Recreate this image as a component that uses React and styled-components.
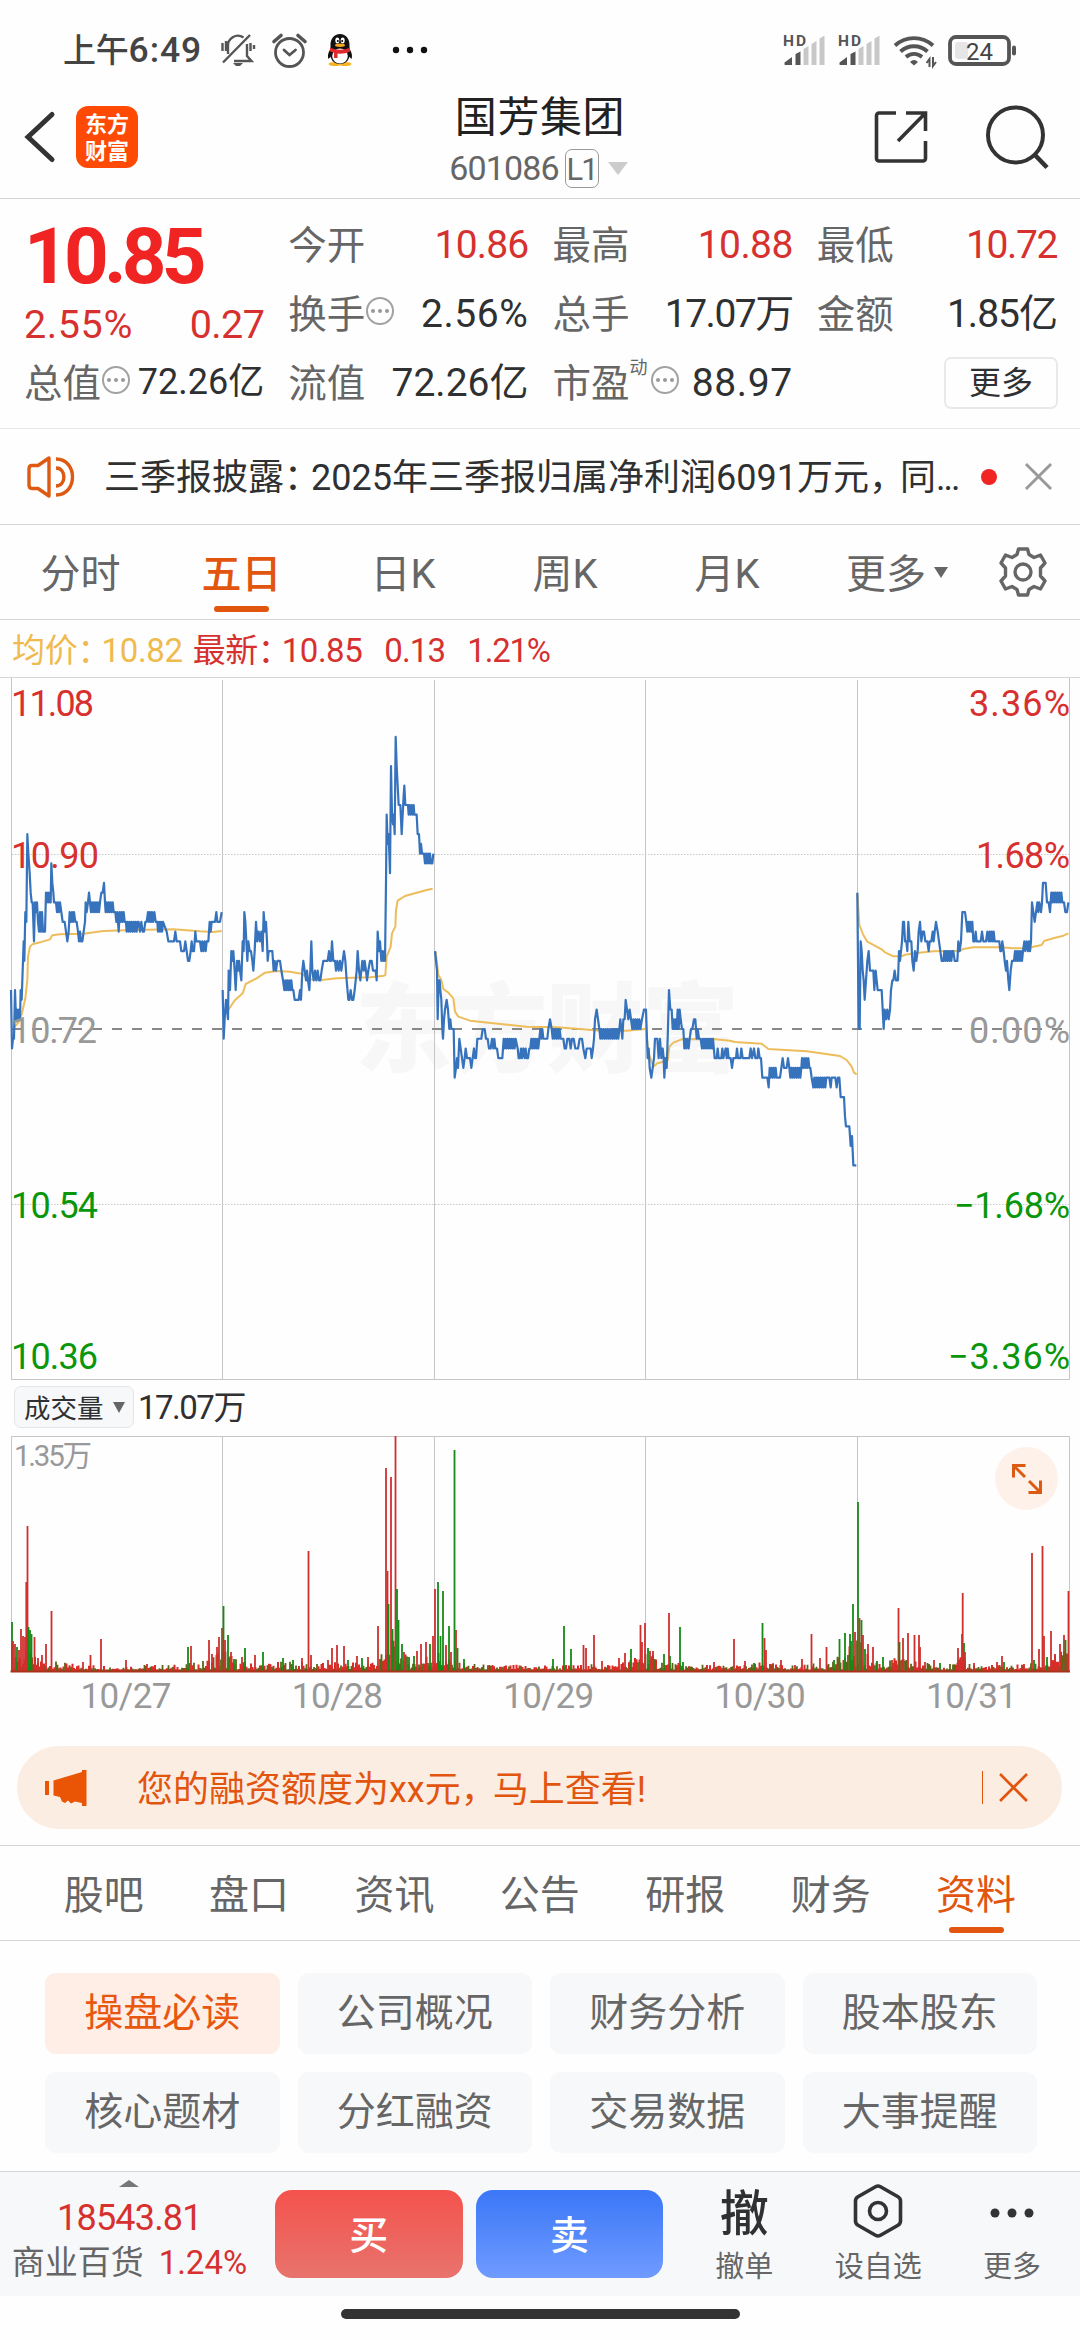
import React from "react";
import styled, { createGlobalStyle } from "styled-components";

const C = {
  ink: "#2f3031",
  grey: "#666",
  light: "#999",
  line: "#d5d5d5",
  red: "#d6312f",
  green: "#0a960a",
  orange: "#e2550f",
  amber: "#efba4e",
  blue: "#3673bc",
};

const Global = createGlobalStyle`
  * { box-sizing: border-box; }
  body {
    margin: 0;
    background: #fefefe;
    color: ${C.ink};
    font-family: Roboto, "Noto Sans CJK SC", sans-serif;
    line-height: 1.2;
  }
  svg { display: block; flex: none; overflow: visible; }
`;

const Screen = styled.main`
  width: 1080px;
  height: 2340px;
  overflow: hidden;
  display: flex;
  flex-direction: column;
`;

/* ---------- status bar ---------- */
const StatusBar = styled.div`
  height: 68px;
  padding: 33px 63px 0 63px;
  display: flex;
  justify-content: space-between;
  align-items: flex-start;
`;
const StatusGroup = styled.div`
  display: flex;
  align-items: center;
  height: 34px;
  gap: ${(p) => p.$gap}px;
`;
const Clock = styled.span`
  font-size: 33px;
  font-weight: 500;
  color: #444;
  letter-spacing: -0.2px;
  line-height: 34px;
  width: 141px;
  padding-top: 1px;
  white-space: nowrap;
`;
const ClockDigits = styled.span`
  font-size: 35.5px;
  letter-spacing: 0.9px;
`;

/* ---------- header ---------- */
const Header = styled.header`
  height: 131px;
  padding: 8px 32px 0 24px;
  border-bottom: 1px solid ${C.line};
  display: grid;
  grid-template-columns: 1fr auto 1fr;
  align-items: center;
`;
const HeaderSide = styled.div`
  display: flex;
  align-items: center;
  gap: ${(p) => p.$gap}px;
  justify-content: ${(p) => (p.$end ? "flex-end" : "flex-start")};
`;
const Logo = styled.div`
  width: 62px;
  height: 62px;
  border-radius: 12px;
  background: #ff4a05;
  color: #fff;
  font-family: "Noto Sans CJK SC", sans-serif;
  font-weight: 700;
  font-size: 22px;
  line-height: 27px;
  padding: 3px 0 0 9px;
`;
const TitleBlock = styled.div`
  display: flex;
  flex-direction: column;
  align-items: center;
  margin: 10px 0 0 8px;
`;
const Title = styled.h1`
  margin: 0;
  padding-top: 1px;
  font-size: 42px;
  line-height: 52px;
  font-weight: 400;
  color: #222;
  letter-spacing: 0.6px;
`;
const CodeRow = styled.div`
  height: 49px;
  display: flex;
  align-items: center;
  margin-left: -3px;
  color: ${C.grey};
  font-size: 34px;
  letter-spacing: -0.9px;
`;
const Level = styled.span`
  margin: 0 9px 0 6px;
  width: 34px;
  height: 39px;
  border: 1px solid #999;
  border-radius: 7px;
  font-size: 31px;
  line-height: 39px;
  text-align: center;
  letter-spacing: -2px;
`;
const Caret = styled.i`
  width: 0;
  height: 0;
  border: ${(p) => p.$w / 2}px solid transparent;
  border-bottom-width: ${(p) => (p.$up ? p.$h : 0)}px;
  border-top-width: ${(p) => (p.$up ? 0 : p.$h)}px;
  border-top-color: ${(p) => p.$c};
  border-bottom-color: ${(p) => p.$c};
`;

/* ---------- quote ---------- */
const Quote = styled.section`
  height: 230px;
  padding: 11px 24px 0;
  border-bottom: 1px solid #e8e8e8;
  display: grid;
  grid-template-columns: repeat(4, 1fr);
  column-gap: 25px;
`;
const Column = styled.div`
  display: flex;
  flex-direction: column;
`;
const Price = styled.div`
  height: 92px;
  line-height: 93px;
  font-size: 78px;
  font-weight: 700;
  color: #f02423;
  letter-spacing: -4.8px;
  white-space: nowrap;
`;
const Changes = styled.div`
  height: 46px;
  margin-right: -1px;
  display: flex;
  justify-content: space-between;
  align-items: center;
  color: ${C.red};
`;
const Change = styled.span`
  font-size: 39.5px;
  letter-spacing: ${(p) => p.$ls}px;
`;
const Row = styled.div`
  height: 69px;
  display: flex;
  align-items: center;
  white-space: nowrap;
`;
const Label = styled.span`
  padding-top: 3px;
  font-size: 38.5px;
  color: ${C.grey};
`;
const Sup = styled.sup`
  align-self: flex-start;
  font-size: 18px;
  line-height: 18px;
  margin: 11px 0 0 0;
  color: ${C.grey};
`;
const Hint = styled.span`
  margin: -5px 0 0 ${(p) => p.$ml || 1}px;
  width: 28px;
  height: 28px;
  border: 2px solid #a2a2a2;
  border-radius: 50%;
  display: flex;
  align-items: center;
  justify-content: center;
  gap: 3px;
  &::before, &::after { content: ""; }
  &::before, &::after, & > i {
    width: 4px;
    height: 4px;
    border-radius: 50%;
    background: #999;
  }
`;
const Value = styled.span`
  margin: 1px -1px 0 auto;
  font-size: ${(p) => p.$s || 39}px;
  letter-spacing: ${(p) => p.$ls || 0}px;
  color: ${(p) => (p.$red ? C.red : C.ink)};
`;
const MoreButton = styled.button`
  margin: 0 -2px 0 auto;
  padding: 0;
  width: 114px;
  height: 52px;
  border: 2px solid #e9e9e9;
  border-radius: 7px;
  background: none;
  font: 400 32px/46px Roboto, "Noto Sans CJK SC", sans-serif;
  color: ${C.ink};
`;

/* ---------- notice ---------- */
const Notice = styled.section`
  height: 96px;
  padding: 0 28px 0 27px;
  border-bottom: 1px solid ${C.line};
  display: flex;
  align-items: center;
`;
const NoticeText = styled.p`
  margin: 0 0 0 29px;
  padding-top: 4px;
  width: 877px;
  font-size: 36px;
  white-space: nowrap;
`;
const Tight = styled.span`
  letter-spacing: ${(p) => p.$by}px;
`;
const Dot = styled.i`
  width: 16px;
  height: 16px;
  margin-right: 28px;
  border-radius: 50%;
  background: #f02423;
`;

/* ---------- tabs ---------- */
const PeriodTabs = styled.nav`
  height: 95px;
  padding: 0 33px 0 0;
  border-bottom: 1px solid ${C.line};
  display: flex;
  align-items: stretch;
`;
const Tab = styled.a`
  width: ${(p) => p.$w}px;
  display: flex;
  flex-direction: column;
  align-items: center;
  padding-top: 21px;
  font-size: 40px;
  line-height: 58px;
  font-weight: ${(p) => (p.$on && p.$bold ? 500 : 400)};
  color: ${(p) => (p.$on ? C.orange : C.grey)};
  &::after {
    content: "";
    margin-top: 2px;
    width: 55px;
    height: 6px;
    border-radius: 3px;
    background: ${(p) => (p.$on ? "#e2550f" : "transparent")};
  }
`;
const MoreTab = styled.span`
  flex: 1;
  display: flex;
  align-items: center;
  gap: 8px;
  padding-left: 38px;
  font-size: 40px;
  color: ${C.grey};
`;
const MoreText = styled.span`
  padding-top: 5px;
`;
const GearBox = styled.span`
  display: flex;
  align-items: center;
`;
const DetailTabs = styled.nav`
  height: 96px;
  padding: 0 31px;
  border-top: 1px solid ${C.line};
  border-bottom: 1px solid ${C.line};
  display: flex;
`;

const Legend = styled.div`
  height: 58px;
  padding: 5px 12px 0;
  border-bottom: 1px solid ${C.line};
  display: flex;
  align-items: center;
  font-size: 33px;
  white-space: pre;
`;
const LegendItem = styled.span`
  color: ${(p) => p.$c || C.red};
  margin-right: ${(p) => p.$mr || 0}px;
  letter-spacing: ${(p) => p.$ls}px;
`;

/* ---------- volume ---------- */
const VolumeHead = styled.div`
  height: 55px;
  padding: 5px 0 8px 14px;
  display: flex;
  align-items: center;
  gap: 4px;
`;
const Picker = styled.span`
  width: 120px;
  height: 42px;
  padding-left: 9px;
  border: 1px solid #e4e5e8;
  border-radius: 7px;
  background: #f7f8fa;
  display: flex;
  align-items: center;
  gap: 9px;
  font-size: 27px;
`;
const PickerText = styled.span`
  padding-top: 4px;
  font-size: 26.5px;
`;
const VolumeTotal = styled.span`
  padding-top: 2px;
  font-size: 33px;
  letter-spacing: -1.5px;
`;
const VolumeArea = styled.div`
  position: relative;
  height: 238px;
`;
const Expand = styled.span`
  position: absolute;
  top: 11px;
  right: 22px;
  width: 63px;
  height: 63px;
  border-radius: 50%;
  background: #fef1ea;
  display: flex;
  align-items: center;
  justify-content: center;
`;
const Dates = styled.div`
  height: 46px;
  padding: 0 3px 0 20px;
  display: grid;
  grid-template-columns: repeat(5, 1fr);
  text-align: center;
  font-size: 35px;
  line-height: 46px;
  letter-spacing: -0.5px;
  color: ${C.light};
`;

/* ---------- banner ---------- */
const Banner = styled.div`
  height: 83px;
  margin: 26px 18px 16px 17px;
  padding: 0 34px 0 28px;
  border-radius: 42px;
  background: #fcede3;
  color: ${C.orange};
  display: flex;
  align-items: center;
  font-size: 36px;
`;
const BannerText = styled.span`
  flex: 1;
  margin-left: 50px;
  padding-top: 6px;
`;
const Rule = styled.i`
  width: 1px;
  height: 33px;
  margin-right: 16px;
  background: ${C.orange};
`;

/* ---------- chips ---------- */
const Chips = styled.div`
  height: 230px;
  padding: 32px 43px 0 45px;
  display: grid;
  grid-template-columns: repeat(4, 1fr);
  grid-auto-rows: 81px;
  gap: 18px;
`;
const Chip = styled.span`
  border-radius: 11px;
  background: ${(p) => (p.$on ? "#feeee6" : "#f7f8fa")};
  color: ${(p) => (p.$on ? "#e8570f" : C.grey)};
  font-size: 39px;
  line-height: 80px;
  text-align: center;
`;

/* ---------- bottom bar ---------- */
const BottomBar = styled.footer`
  height: 125px;
  border-top: 1px solid ${C.line};
  background: #f7f8fa;
  display: flex;
`;
const Sector = styled.div`
  width: 275px;
  padding: 8px 21px 0 5px;
  display: flex;
  flex-direction: column;
  align-items: center;
  color: ${C.red};
`;
const SectorIndex = styled.span`
  margin-top: 10px;
  font-size: 36px;
  line-height: 42px;
  letter-spacing: -0.8px;
`;
const SectorRow = styled.span`
  display: flex;
  gap: 15px;
  font-size: 33px;
  line-height: 48px;
  white-space: nowrap;
`;
const SectorName = styled.span`
  color: ${C.grey};
`;
const Trade = styled.button`
  width: 188px;
  height: 88px;
  margin: 18px 13px 0 0;
  padding: 0 0 5px;
  border: 0;
  border-radius: 17px;
  color: #fff;
  background: linear-gradient(${(p) => p.$from}, ${(p) => p.$to});
  font: 500 39px Roboto, "Noto Sans CJK SC", sans-serif;
`;
const Action = styled.div`
  width: ${(p) => p.$w}px;
  display: flex;
  flex-direction: column;
  align-items: center;
  font-size: 29px;
  line-height: 38px;
  color: ${C.grey};
`;
const ActionIcon = styled.span`
  height: 76px;
  padding-top: ${(p) => p.$pt || 0}px;
  display: flex;
  align-items: center;
  color: ${C.ink};
  font-size: 49px;
  font-weight: 500;
`;
const HomeArea = styled.div`
  height: 44px;
  display: flex;
  justify-content: center;
  padding-top: 13px;
`;
const HomeBar = styled.i`
  width: 399px;
  height: 10px;
  border-radius: 5px;
  background: #333;
`;

/* ---------- icons ---------- */
const BellOff = () => (
  <svg width="34" height="34" viewBox="0 0 34 34" fill="none" stroke="#555" strokeWidth="2.4">
    <path d="M7 21V14a10 10 0 0 1 15.500-9.500M26 11v12l4.500 5H13M2 29.500L29 2M1.500 10v8M5 8v10M29.500 10v8M33 12v4" />
    <path d="M12 30h10l-3 3h-4z" fill="#555" stroke="none" />
  </svg>
);
const Alarm = () => (
  <svg width="35" height="35" viewBox="0 0 35 35" fill="none" stroke="#555" strokeWidth="2.800" strokeLinecap="round">
    <circle cx="17.500" cy="19.500" r="14" />
    <path d="M12 17l5.500 5 6-5" />
    <path d="M2 8.500l7-6M33 8.500l-7-6" strokeWidth="3.600" />
  </svg>
);
const Penguin = () => (
  <svg width="32" height="34" viewBox="0 0 32 34">
    <ellipse cx="11" cy="31" rx="6.500" ry="2" fill="#f5b324" />
    <ellipse cx="21" cy="31" rx="6.500" ry="2" fill="#f5b324" />
    <path d="M7 15C5 18 3 22 4.500 26l3-3M25 15c2 3 4 7 2.500 11l-3-3" fill="#111" />
    <path d="M6.500 13C6 6 10 1 16 1s10 5 9.500 12v7C26 27 22 31 16 31S6 27 6.500 20z" fill="#111" />
    <ellipse cx="16" cy="23" rx="7.800" ry="7.500" fill="#fff" />
    <ellipse cx="13.300" cy="7.500" rx="2" ry="3" fill="#fff" />
    <ellipse cx="18.700" cy="7.500" rx="2" ry="3" fill="#fff" />
    <circle cx="13.800" cy="8" r="1" /><circle cx="18.200" cy="8" r="1" />
    <ellipse cx="16" cy="12.300" rx="5" ry="1.700" fill="#f5a81c" />
    <path d="M6 14.500c6 3 14 3 20 0v4c-4 2-9 2.500-12.500 2v4.500H10v-5.500L6 18.500z" fill="#e02a2c" />
  </svg>
);
const StatusDots = () => (
  <svg width="36" height="8" viewBox="-2 0 36 8" fill="#111">
    <circle cx="4" cy="4" r="3.200" /><circle cx="18" cy="4" r="3.200" /><circle cx="32" cy="4" r="3.200" />
  </svg>
);
const Signal = () => (
  <svg width="43" height="32" viewBox="0 0 43 32">
    <text x="0" y="12" fontSize="15.500" fontWeight="700" fill="#555" textLength="23">HD</text>
    <g fill="#555"><path d="M1.500 30.500v-2l7.500-5.500v8h-7zM12.500 31V20l5-2.500V31z" /></g>
    <g fill="#c8c8c8"><path d="M20.500 31V15l5-3v19zM28.500 31V10l5-3v24zM36.500 31V4.500l5-3V31z" /></g>
  </svg>
);
const Wifi = () => (
  <svg width="43" height="35" viewBox="0 0 43 35" fill="none" stroke="#555" strokeWidth="3.800">
    <path d="M2 12.500a28 28 0 0 1 38 0M7.500 18.500a20 20 0 0 1 27 0M13 24a12 12 0 0 1 16 0" />
    <path d="M17 29q4-4 8 0l-4 3.500z" fill="#555" stroke="none" />
    <path d="M32.500 31l3-4v8M42 30l-3 4v-9" fill="none" strokeWidth="2" transform="translate(1 -1)" />
  </svg>
);
const Battery = () => (
  <svg width="69" height="31" viewBox="0 0 69 31">
    <rect x="7" y="7" width="13" height="17" rx="3" fill="#e6e6e6" />
    <rect x="2" y="2" width="59" height="27" rx="6" fill="none" stroke="#555" strokeWidth="3.800" />
    <rect x="64" y="10.500" width="4" height="10" rx="2" fill="#555" />
    <text x="18" y="24.500" fontSize="24" fill="#444" textLength="27">24</text>
  </svg>
);
const Back = () => (
  <svg width="31" height="54" viewBox="0 0 31 54" fill="none" stroke="#333" strokeWidth="5" strokeLinecap="round">
    <path d="M28 4.500L4 27l24 22.500" />
  </svg>
);
const Share = () => (
  <svg width="54" height="54" viewBox="0 0 54 54" fill="none" stroke="#333" strokeWidth="3.600">
    <path d="M22 3H5a2.500 2.500 0 0 0-2.500 2.500v43A2.500 2.500 0 0 0 5 51h44a2.500 2.500 0 0 0 2.500-2.500V31M32 3h19.500v18M51 3.500L24 31" />
  </svg>
);
const Search = () => (
  <svg width="64" height="66" viewBox="-1 0 64 66" fill="none" stroke="#333" strokeWidth="4">
    <circle cx="30.500" cy="31" r="27.500" />
    <path d="M49 50l13 13.500" strokeWidth="4.600" />
  </svg>
);
const Speaker = () => (
  <svg width="48" height="42" viewBox="0 0 48 42" fill="none" stroke="#dd5a12" strokeWidth="3.400" strokeLinejoin="round">
    <path d="M22 2L11 9.500H5Q2 9.500 2 13v16q0 3.500 3 3.500h6L22 40z" />
    <path d="M29 3c22 0 22 36 0 36M29 12c10.500 0 10.500 18 0 18" />
  </svg>
);
const Cross = ({ size, color, weight }) => (
  <svg width={size} height={size} viewBox="0 0 28 28" stroke={color} strokeWidth={weight}>
    <path d="M1 1l26 26M27 1L1 27" />
  </svg>
);
const Gear = () => (
  <svg width="48" height="50" viewBox="0 0 48 50" fill="none" stroke="#666" strokeWidth="3.400" strokeLinejoin="round">
    <path d="M19.500 2h9l1.500 5.500 5 3 6.500-2.500 4.500 8-4.500 5v8l4.500 5-4.500 8-6.500-2.500-5 3-1.500 5.500h-9L18 42.500l-5-3L6.500 42 2 34l4.500-5v-8L2 16l4.500-8 6.500 2.500 5-3z" />
    <circle cx="24" cy="25" r="8" />
  </svg>
);
const ExpandIcon = () => (
  <svg width="32" height="32" viewBox="0 0 32 32" fill="none" stroke="#dd5a12" strokeWidth="3">
    <path d="M14.500 2.500h-12v12M3 3l11 11M17.500 29.500h12v-12M29 29L18 18" />
  </svg>
);
const Megaphone = () => (
  <svg width="42" height="38" viewBox="0 0 42 38" fill="#e95504">
    <path d="M0 12h4v14H0zM8.500 11.500L37 3V1h4.500v36H37v-3l-7-1.500-4 2-3-3-3 2.500-3-1.500-2-4.500-6.500-1.500z" />
  </svg>
);
const Hexagon = () => (
  <svg width="50" height="54" viewBox="0 0 50 54" fill="none" stroke="#333" strokeWidth="3.600" strokeLinejoin="round">
    <path d="M22.500 2.700q2.500-1.400 5 0l17.500 10q2.500 1.500 2.500 4.300v20q0 2.800-2.500 4.300l-17.500 10q-2.500 1.400-5 0L5 41.300Q2.500 39.800 2.500 37V17q0-2.800 2.500-4.300z" />
    <circle cx="25" cy="27" r="8.500" />
  </svg>
);
const MoreDots = () => (
  <svg width="44" height="10" viewBox="0 0 44 10" fill="#333">
    <circle cx="5" cy="5" r="4.500" /><circle cx="22" cy="5" r="4.500" /><circle cx="39" cy="5" r="4.500" />
  </svg>
);

/* ---------- price chart ---------- */
/* "x,v" is a tick in thirds of a pixel and cents from the base price;
   "~a:b:hi:lo" is a stretch that swings between two neighbouring prices. */
const expand = (text) =>
  text.split(" ").flatMap((t) => {
    if (t[0] !== "~") return [t.split(",").map(Number)];
    const [a, b, hi, lo] = t.slice(1).split(":").map(Number);
    const out = [];
    for (let x = a, i = 0; x <= b; x += 3, i++) out.push([x, i % 2 ? lo : hi]);
    return out;
  });

const PRICES = [
  [0, "33,4 36,-2 39,-1 42,-1 45,4 48,1 51,2 53,1 57,2 60,1 62,4 65,3 68,6 71,9 73,7 76,12 79,11 82,20 85,18 89,16 92,14 95,13 98,13 102,9 105,13 108,12 111,13 114,11 117,10 120,12 123,10 126,12 129,10 135,10 138,14 141,13 144,14 147,13 150,14 152,13 154,17 157,15 160,14 162,13 168,13 171,12 174,13 177,12 180,13 184,12 188,11 194,11 198,10 202,9 206,10 209,12 213,11 216,12 219,11 222,12 226,11 230,11 234,10 237,9 240,10 243,9 247,9 251,10 255,11 257,13 260,12 264,13 267,14 ~270:300:13:12 304,14 308,14 312,15 315,13 ~317:341:12:13 346,12 349,11 352,12 356,10 359,12 362,11 365,12 368,11 371,12 374,11 378,11 ~380:413:10:11 416,11 420,10 424,11 428,10 432,10 436,11 440,11 444,12 447,11 450,12 453,11 456,12 459,11 463,12 467,11 472,11 ~474:489:10:11 500,10 505,9 522,9 526,10 530,9 540,9 544,8 552,8 556,9 560,8 564,7 568,7 572,8 575,9 578,8 582,8 586,10 589,9 600,9 604,8 607,9 610,8 614,9 617,8 620,9 625,9 629,11 632,10 635,11 645,11 649,12 652,11 660,11 665,12"],
  [0, "668,4 671,-1 674,1 678,3 681,2 684,1 686,6 690,4 694,8 697,7 700,8 704,6 707,4 711,7 714,6 717,7 720,6 724,5 728,9 731,8 733,12 736,11 739,9 742,7 745,9 749,8 753,8 757,7 760,6 764,8 768,11 772,9 776,10 780,9 784,10 788,8 791,12 795,10 798,11 801,9 803,7 806,8 817,8 821,6 824,7 828,6 832,7 840,7 844,6 849,5 ~853:877:4:5 880,4 884,3 896,3 900,4 903,3 907,6 910,7 914,6 918,5 921,6 924,5 928,4 931,6 934,9 937,6 941,5 945,6 949,5 953,6 957,5 961,5 965,6 970,7 983,7 987,8 990,7 993,7 996,9 1000,7 1005,7 1008,6 1012,7 1016,6 1020,7 1024,6 1028,7 1032,8 1036,7 1040,5 1045,3 1048,3 1052,4 1056,3 1060,3 1064,4 1067,5 1070,6 1073,8 1077,6 1081,5 1084,6 1087,7 1091,6 1094,7 1098,6 1101,5 1105,6 1110,7 1115,7 1119,6 1127,6 1130,5 1133,10 1137,8 1140,9 1144,7 1147,8 1150,7 1153,8 1155,7 1158,15 1160,22 1163,19 1166,20 1170,16 1173,27 1176,22 1179,21 1181,22 1184,20 1187,30 1190,27 1193,25 1196,23 1201,23 1205,20 1208,22 1211,24 1213,25 1216,23 1224,23 1226,22 1229,23 1232,22 1235,23 1238,22 1241,23 1243,22 1250,22 1253,20 1257,20 1260,18 1263,19 1266,18 1272,18 ~1275:1293:17:18 1297,17 1300,18"],
  [1110, "195,8 198,7 201,6 203,1 206,5 209,5 211,4 214,3 217,0 219,-1 222,1 225,2 230,3 234,2 238,0 241,1 244,0 251,0 254,-5 258,-4 261,-3 264,-4 268,-1 272,-2 276,-3 280,-4 284,-3 287,-2 291,-3 300,-3 304,-4 308,-3 312,-2 315,-3 318,-3 322,-1 334,-1 338,0 344,0 348,-1 353,-1 357,-2 362,-2 366,-1 370,-2 373,-1 376,-2 381,-2 385,-3 397,-3 ~401:439:-1:-2 443,-2 446,-3 450,-3 453,-2 456,-3 460,-2 464,-3 467,-2 470,-3 474,-3 478,-2 481,-2 ~484:508:-1:-2 511,0 514,-1 517,0 520,-1 532,-1 535,0 540,1 545,0 ~548:572:-1:0 580,-1 584,-2 588,-2 592,-1 598,-1 602,-2 606,-1 611,-1 616,-2 624,-2 629,-1 636,-1 640,-2 646,-3 650,-2 662,-2 665,-3 669,-2 672,-1 675,1 680,2 684,1 688,0 ~691:748:-1:0 751,1 754,0 757,-1 760,1 764,1 767,3 771,2 775,1 779,2 783,1 787,0 ~790:812:1:0 816,1 822,2 828,2 831,-1 833,-3 836,-2 839,-4 844,-5 848,-4 852,-3 855,-1 862,-1 866,-3 870,-1 874,-3 878,-2 881,-3 883,-5 886,-3 890,-4 893,-1 897,4 901,2 905,2 908,0 911,1 914,0 917,1 920,0 923,2 926,0 929,2 932,1 936,0 940,0 943,-2 946,-1 949,-2 952,-1 956,-2 959,-1 963,0 967,0 972,1 976,1 980,-1 983,0 987,-1 992,-1 ~996:1030:-2:-1 1034,-3 1040,-3 1043,-2 1046,-3 1054,-3 1057,-2 1060,-3 1067,-2 1070,-3 1073,-2 1076,-3 1082,-3 1086,-4 1090,-3 1098,-3 1101,-2 1104,-3 1111,-3 1114,-2 1118,-3 1138,-3 1142,-2 1146,-3 1152,-2 1156,-3 1162,-3 1165,-2 1169,-3 1173,-3 1177,-5 1192,-5 1196,-6 ~1199:1221:-4:-5 1230,-5 1234,-4 1238,-3 1242,-4 1250,-4 1254,-3 1258,-4 ~1261:1294:-5:-4 1296,-3 1300,-4 ~1303:1318:-3:-4 1321,-4 1325,-5 ~1330:1370:-6:-5 1378,-5 1382,-6 1385,-5 1396,-5 1400,-6 1404,-5 1408,-5 1412,-7 1422,-7 1425,-9 1428,-10 1438,-10 1442,-12 1446,-11 1450,-14 1459,-14"],
  [2100, "472,14 476,0 479,0 482,9 485,8 488,6 491,5 494,3 498,5 502,7 506,8 510,6 520,6 523,4 527,6 530,5 533,4 545,4 548,2 551,0 554,2 558,1 562,2 566,1 570,2 573,4 577,5 580,5 584,6 588,5 594,5 597,8 600,7 603,8 606,9 609,11 612,11 615,9 619,9 622,8 625,11 629,9 634,9 637,7 641,6 645,8 649,7 653,8 656,10 660,11 664,9 668,10 672,10 676,9 682,9 686,8 689,9 694,9 698,10 701,9 704,10 708,11 713,10 717,9 721,8 725,7 730,7 ~733:757:8:7 760,8 764,7 772,7 775,9 779,8 783,9 787,12 795,12 799,11 802,10 805,11 808,10 811,11 814,10 817,11 820,9 824,9 827,10 830,9 842,9 846,10 850,9 858,9 862,10 866,9 ~869:885:10:9 888,9 898,9 901,8 904,8 907,9 911,8 914,7 918,6 921,7 925,5 928,4 932,6 936,7 942,7 ~945:970:8:7 973,9 976,8 980,9 984,8 987,9 990,8 993,9 996,13 1000,12 1004,11 1008,12 1012,13 1015,12 1018,13 1023,12 1026,13 1029,15 1037,15 1041,13 1046,13 1050,12 ~1054:1088:14:13 1092,13 1096,12 1101,12 1105,13"],
];
/* running average, both coordinates in thirds of a pixel */
const AVERAGES = [
  [0, 0, "40,1075 55,1058 66,1030 76,985 82,930 84,860 90,830 97,823 120,817 150,808 157,796 180,793 250,791 310,783 400,780 520,778 600,784 640,786 665,783"],
  [0, 0, "685,1020 703,992 728,970 737,942 770,925 795,908 830,903 870,905 905,911 930,928 965,930 1010,925 1060,923 1110,922 1152,917 1156,915 1160,860 1172,830 1176,790 1186,770 1188,720 1193,692 1215,678 1250,668 1280,660 1298,656"],
  [1110, 150, "197,695 205,765 214,780 220,807 235,818 250,835 255,875 265,890 300,902 370,910 470,920 560,922 630,927 690,932 770,932 826,927"],
  [1110, 150, "828,930 836,1000 850,1040 862,1030 893,1022 898,980 910,968 935,958 1030,957 1080,962 1095,966 1175,971 1195,987 1310,994 1410,1008 1430,1020 1445,1040 1452,1058 1460,1063"],
  [2100, 570, "472,100 478,195 490,225 502,245 545,268 555,277 580,289 605,289 615,284 650,279 700,274 780,272 790,267 820,262 900,262 940,265 990,264 1000,260 1025,255 1032,243 1060,235 1090,227 1105,220"],
];
const EDGES = [222.5, 434.5, 645.5, 857.5];
const BASE_Y = 351;

const LABELS = [
  ["11.08", "3.36%", 38, C.red, 81, 101],
  ["10.90", "1.68%", 190, C.red, 86, 94],
  ["10.72", "0.00%", 365, C.light, 84, 101],
  ["10.54", "−1.68%", 540, C.green, 85, 116],
  ["10.36", "−3.36%", 691, C.green, 85, 122],
];

const PriceChart = () => (
  <svg width="1080" height="703" viewBox="0 0 1080 703" fill="none">
    <text x="547" y="386" textAnchor="middle" fontSize="97" fontWeight="900" fill="#f7f7f7" textLength="384">东方财富</text>
    <path d={`M11.500 0V701.500H1069.500V0${EDGES.map((x) => `M${x} 2V701.500`).join("")}`} stroke="#c6c6c6" />
    <path d="M12 176.500H1069M12 526.500H1069" stroke="#c9c9c9" strokeDasharray="1.500 1.500" />
    <path d={`M12 ${BASE_Y}H1069`} stroke="#888" strokeWidth="1.800" strokeDasharray="10 10" />
    {AVERAGES.map(([dx, dy, s]) => (
      <polyline key={dx + s} stroke="#edbd5c" strokeWidth="2" strokeLinejoin="round"
        points={expand(s).map(([x, y]) => `${(x + dx) / 3},${(y + dy) / 3 - 8}`).join(" ")} />
    ))}
    {PRICES.map(([dx, s]) => (
      <polyline key={dx + s} stroke={C.blue} strokeWidth="2.200" strokeLinejoin="round"
        points={expand(s).map(([x, v]) => `${(x + dx) / 3},${BASE_Y - v * 9.74}`).join(" ")} />
    ))}
    {LABELS.map(([l, r, cy, c, lw, rw]) => (
      <g key={l} fill={c} fontSize="36">
        <text x="11" y={cy - 13 + 0.355 * 36} textLength={lw + 2}>{l}</text>
        <text x={1070 - rw} y={cy - 13 + 0.355 * 36} textLength={rw}>{r}</text>
      </g>
    ))}
  </svg>
);

/* ---------- volume chart ---------- */
const SPIKES =
  "12,50g 13,31r 15,28r 17,25g 19,22r 21,43r 23,36r 25,35r 26.3,90r 27.5,146r 28.5,45g 30,42g 31.5,38g 34.5,35r 38,14r 42,17r 46,28r 51.5,61r 83,10r 90.5,17r 101,33r 126,12r 147,8r 188,25g 191,26r 209,32r 212,18r 217,25r 219,35r 222,44r 223.5,66g 225,32r 228,37g 231,20r 234,13g 242,15r 245,24g 255,17r 263,20g 283,14g 293,12g 302,14r 308.5,121r 311,17r 328,12r 332,24r 337,27r 344,26r 348,12g 357,16r 362,14g 368,15r 378,46r 386,204r 387.5,101r 388.5,68g 391,195r 392.5,43g 395.5,236r 397,83g 398.5,52g 402,28g 404,20r 409,15g 414,16g 417,21r 421,28r 426,30r 430,28g 433,36r 435,83r 438,90g 440.5,36g 443,81g 446,27r 449,46g 451,20r 454.5,222g 456,42r 457.5,24g 464,13g 553,13g 564,46g 571,23g 583.5,27r 586,24r 594,37r 602,11r 619,14r 625,19r 631,23g 640.5,47r 642,30r 645,49r 648,24g 650,21r 653,21r 664,18g 669,59r 670,16g 680,45g 683,10g 714,10r 734,33r 745,11r 754,9g 762.5,49g 764.5,34r 766,22r 781,12r 795,7r 802,13r 811.5,38r 820,14r 826.5,25r 834,12g 839.5,33g 845,39g 850,38g 853,68g 855,40r 858,170g 859.5,54r 861.5,52g 863,37r 865,23g 868,28r 873,25r 877,11g 883,15g 892,12r 898.5,64r 899.5,30g 903,34r 908,39r 914.5,37r 919,37r 920,25r 925,10r 934,12r 940,9g 958,24r 962,38r 962.7,79r 964,29g 965,20r 974,9r 997,10r 1002,16r 1004,10g 1024,8r 1032,119r 1034,12g 1039,23r 1042.5,126r 1044,36r 1047,15g 1051,41r 1055,18r 1060,28r 1064,37r 1065.5,32g 1068.5,81r"
    .split(" ")
    .map((t) => {
      const [x, v] = t.split(",");
      return [Number(x), parseFloat(v), v.endsWith("r")];
    });

const BUSY = [
  [12, 24, 18], [24, 16, 20], [222, 22, 12], [393, 26, 14], [434, 20, 14],
  [645, 18, 14], [855, 34, 12], [900, 8, 24], [963, 12, 5], [1066, 22, 13], [290, 4, 40], [350, 5, 20], [765, 7, 5],
];
const noise = (i) => {
  const v = Math.sin(i * 12.9898) * 43758.5453;
  return v - Math.floor(v);
};
const SMALL = [];
for (let i = 0; i * 1.5 < 1056; i++) {
  const x = 12.5 + i * 1.5;
  const swell = BUSY.reduce((m, [c, h, w]) => Math.max(m, h * Math.exp(-Math.abs(x - c) / w)), 0);
  const n = noise(i + 1);
  SMALL.push([x, 2.5 + n * n * 5 + n * swell, noise(i + 700) > 0.42]);
}

const VolumeChart = () => (
  <svg width="1080" height="238" viewBox="0 0 1080 238" fill="none">
    <path d={`M11.500 236V0.500H1069.500V236${EDGES.map((x) => `M${x} 0V236`).join("")}`} stroke="#c6c6c6" />
    <path d={SMALL.filter((b) => b[2]).map(([x, h]) => `M${x} 236v${-h}`).join("")} stroke="#dc2a26" strokeWidth="2" />
    <path d={SMALL.filter((b) => !b[2]).map(([x, h]) => `M${x} 236v${-h}`).join("")} stroke="#5d6415" strokeWidth="1.800" />
    {SPIKES.map(([x, h, up]) => (
      <path key={x} d={`M${x} 236v${-h}`} stroke={up ? "#cf302e" : "#168a16"} strokeWidth="1.800" />
    ))}
    <path d="M10.500 235.500H1070" stroke="#a8321a" strokeWidth="2" />
    <text x="14" y="30" fontSize="29.500" fill={C.light} textLength="78">1.35万</text>
  </svg>
);

const More = ({ ml }) => <Hint $ml={ml}><i /></Hint>;

const Stat = ({ label, value, red, hint, ls, s }) => (
  <Row>
    <Label>{label}</Label>
    {hint && <More />}
    <Value $red={red} $ls={ls} $s={s}>{value}</Value>
  </Row>
);

export default function App() {
  return (
    <Screen>
      <Global />
      <StatusBar>
        <StatusGroup $gap={17}>
          <Clock>上午<ClockDigits>6:49</ClockDigits></Clock>
          <BellOff />
          <Alarm />
          <Penguin />
          <span />
          <StatusDots />
        </StatusGroup>
        <StatusGroup $gap={12}>
          <Signal />
          <Signal />
          <Wifi />
          <Battery />
        </StatusGroup>
      </StatusBar>

      <Header>
        <HeaderSide $gap={21}>
          <Back />
          <Logo>东方<br />财富</Logo>
        </HeaderSide>
        <TitleBlock>
          <Title>国芳集团</Title>
          <CodeRow>
            601086<Level>L1</Level><Caret $w={20} $h={13} $c="#ccc" />
          </CodeRow>
        </TitleBlock>
        <HeaderSide $end $gap={56}>
          <Share />
          <Search />
        </HeaderSide>
      </Header>

      <Quote>
        <Column>
          <Price>10.85</Price>
          <Changes><Change $ls={0.6}>2.55%</Change><Change $ls={-0.6}>0.27</Change></Changes>
          <Stat label="总值" hint value="72.26亿" s={36} ls={0} />
        </Column>
        <Column>
          <Stat label="今开" value="10.86" red ls={-0.8} />
          <Stat label="换手" hint value="2.56%" ls={0.6} />
          <Stat label="流值" value="72.26亿" />
        </Column>
        <Column>
          <Stat label="最高" value="10.88" red ls={-0.6} />
          <Stat label="总手" value="17.07万" ls={-1.5} />
          <Row>
            <Label>市盈</Label><Sup>动</Sup><More ml={3} />
            <Value $ls={0.6}>88.97</Value>
          </Row>
        </Column>
        <Column>
          <Stat label="最低" value="10.72" red ls={-1.4} />
          <Stat label="金额" value="1.85亿" ls={-1} />
          <Row><MoreButton>更多</MoreButton></Row>
        </Column>
      </Quote>

      <Notice>
        <Speaker />
        <NoticeText>
          三季报披露<Tight $by={-9}>：</Tight>2025年三季报归属净利润6091万元<Tight $by={-5}>，</Tight>同<Tight $by={-2}>...</Tight>
        </NoticeText>
        <Dot />
        <Cross size={27} color="#999" weight={3} />
      </Notice>

      <PeriodTabs>
        <Tab $w={161}>分时</Tab>
        <Tab $w={161} $on $bold>五日</Tab>
        <Tab $w={162}>日K</Tab>
        <Tab $w={162}>周K</Tab>
        <Tab $w={162}>月K</Tab>
        <MoreTab><MoreText>更多</MoreText><Caret $w={14} $h={11} $c="#666" /></MoreTab>
        <GearBox><Gear /></GearBox>
      </PeriodTabs>

      <Legend>
        <LegendItem $c={C.amber} $mr={10} $ls={-0.3}>均价<Tight $by={-9}>：</Tight>10.82</LegendItem>
        <LegendItem $mr={22} $ls={-0.5}>最新<Tight $by={-9}>：</Tight>10.85</LegendItem>
        <LegendItem $mr={22} $ls={-0.8}>0.13</LegendItem>
        <LegendItem $ls={-1.2}>1.21%</LegendItem>
      </Legend>

      <PriceChart />

      <VolumeHead>
        <Picker><PickerText>成交量</PickerText><Caret $w={13} $h={11} $c="#666" /></Picker>
        <VolumeTotal>17.07万</VolumeTotal>
      </VolumeHead>
      <VolumeArea>
        <VolumeChart />
        <Expand><ExpandIcon /></Expand>
      </VolumeArea>
      <Dates>
        {["10/27", "10/28", "10/29", "10/30", "10/31"].map((d) => <span key={d}>{d}</span>)}
      </Dates>

      <Banner>
        <Megaphone />
        <BannerText>您的融资额度为xx元<Tight $by={-4}>，</Tight>马上查看!</BannerText>
        <Rule />
        <Cross size={29} color={C.orange} weight={2.6} />
      </Banner>

      <DetailTabs>
        {["股吧", "盘口", "资讯", "公告", "研报", "财务", "资料"].map((t) => (
          <Tab key={t} $w={145.4} $on={t === "资料"}>{t}</Tab>
        ))}
      </DetailTabs>

      <Chips>
        {["操盘必读", "公司概况", "财务分析", "股本股东", "核心题材", "分红融资", "交易数据", "大事提醒"].map((t, i) => (
          <Chip key={t} $on={i === 0}>{t}</Chip>
        ))}
      </Chips>

      <BottomBar>
        <Sector>
          <Caret $up $w={20} $h={7} $c="#777" />
          <SectorIndex>18543.81</SectorIndex>
          <SectorRow><SectorName>商业百货</SectorName>1.24%</SectorRow>
        </Sector>
        <Trade $from="#f4524c" $to="#e8746d">买</Trade>
        <Trade $from="#3b77f7" $to="#6f9bff">卖</Trade>
        <Action $w={136}><ActionIcon $pt={10}>撤</ActionIcon>撤单</Action>
        <Action $w={132}><ActionIcon $pt={1}><Hexagon /></ActionIcon>设自选</Action>
        <Action $w={136}><ActionIcon $pt={6}><MoreDots /></ActionIcon>更多</Action>
      </BottomBar>
      <HomeArea><HomeBar /></HomeArea>
    </Screen>
  );
}
